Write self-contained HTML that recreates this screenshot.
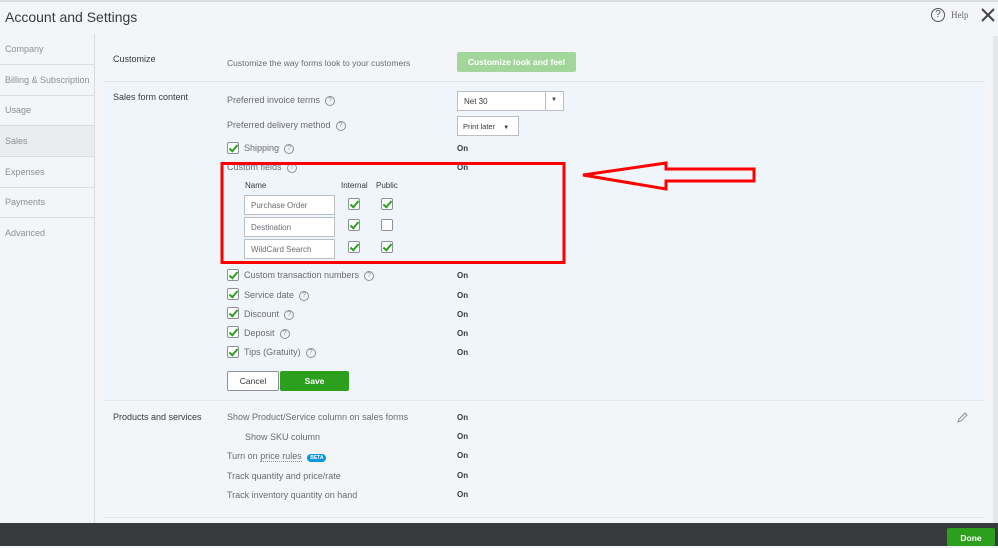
<!DOCTYPE html>
<html><head><meta charset="utf-8"><style>
*{margin:0;padding:0;box-sizing:border-box}
body{width:998px;height:546px;overflow:hidden;background:#f4f5f8;font-family:"Liberation Sans",sans-serif;color:#393a3d;position:relative;font-size:9px}
.a{position:absolute;white-space:nowrap}
.side div{position:absolute;left:0;width:95px;height:31px;border-bottom:1px solid #dcdde0;padding:10px 0 0 5px;color:#8d9096;font-size:9px}
.cb{position:absolute;width:12px;height:12px;border:1px solid #8d9096;background:#fff;border-radius:2px}
.cb.c::after{content:"";position:absolute;left:3px;top:0px;width:3px;height:7px;border:solid #2ca01c;border-width:0 2px 2px 0;transform:rotate(40deg)}
.q{display:inline-block;width:10px;height:10px;border:1px solid #8d9096;border-radius:50%;font-size:7px;text-align:center;line-height:8px;color:#8d9096;margin-left:5px;vertical-align:middle}
.on{position:absolute;left:457px;font-weight:bold;font-size:8px;color:#393a3d}
.inp{position:absolute;left:244px;width:91px;height:20px;border:1px solid #babec5;background:#fff;font-size:8px;padding:5px 0 0 6px;color:#6b6c72}
</style></head><body>
<div class="a" style="left:0;top:0;width:998px;height:2px;background:#dcdde0"></div>
<div class="a" style="left:5px;top:9px;font-size:14px;color:#393a3d">Account and Settings</div>
<div class="a" style="left:931px;top:8px;width:14px;height:14px;border:1.5px solid #555;border-radius:50%;font-size:10px;text-align:center;line-height:11px;color:#555">?</div>
<div class="a" style="left:951px;top:10px;font-family:'Liberation Serif',serif;font-size:9px;color:#666">Help</div>
<svg class="a" style="left:980px;top:7px" width="16" height="16"><path d="M2 2L14 14M14 2L2 14" stroke="#444" stroke-width="2"/></svg>
<div class="side">
<div style="top:34px">Company</div><div style="top:65px">Billing &amp; Subscription</div><div style="top:95px">Usage</div>
<div style="top:126px;background:#ebecef">Sales</div><div style="top:157px">Expenses</div><div style="top:187px">Payments</div><div style="top:218px;border:none">Advanced</div>
</div>
<div class="a" style="left:94px;top:34px;width:1px;height:490px;background:#dcdde0"></div>
<div class="a" style="left:993px;top:36px;width:5px;height:487px;background:#e6e7ea"></div>
<div class="a" style="left:113px;top:54px;font-size:9px">Customize</div>
<div class="a" style="left:227px;top:58px;font-size:8.5px;color:#6b6c72">Customize the way forms look to your customers</div>
<div class="a" style="left:457px;top:52px;width:119px;height:20px;background:#a3d69b;border-radius:2px;color:#fff;font-weight:bold;font-size:8.5px;text-align:center;line-height:20px">Customize look and feel</div>
<div class="a" style="left:104px;top:81px;width:881px;height:320px;background:#f0f5fb;border-top:1px solid #e3e5e8;border-bottom:1px solid #e3e5e8"></div>
<div class="a" style="left:113px;top:92px">Sales form content</div>
<div class="a" style="left:227px;top:95px;color:#6b6c72">Preferred invoice terms<span class="q">?</span></div>
<div class="a" style="left:457px;top:91px;width:107px;height:20px;border:1px solid #babec5;background:#fff;font-size:8px;padding:5px 6px">Net 30</div>
<div class="a" style="left:545px;top:91px;width:1px;height:20px;background:#babec5"></div>
<div class="a" style="left:551px;top:97px;font-size:6px">▼</div>
<div class="a" style="left:227px;top:120px;color:#6b6c72">Preferred delivery method<span class="q">?</span></div>
<div class="a" style="left:457px;top:116px;width:62px;height:20px;border:1px solid #babec5;background:#fff;font-size:7.5px;padding:5px 5px">Print later <span style="font-size:6px;margin-left:6px">▼</span></div>
<div class="cb c" style="left:227px;top:142px"></div>
<div class="a" style="left:244px;top:143px;color:#6b6c72">Shipping<span class="q">?</span></div><div class="on" style="top:144px">On</div>
<div class="a" style="left:227px;top:162px;color:#6b6c72">Custom fields<span class="q">?</span></div><div class="on" style="top:163px">On</div>
<div class="a" style="left:245px;top:181px;font-size:8px">Name</div>
<div class="a" style="left:341px;top:181px;font-size:8px">Internal</div>
<div class="a" style="left:376px;top:181px;font-size:8px">Public</div>
<div class="inp" style="top:195px">Purchase Order</div>
<div class="inp" style="top:217px">Destination</div>
<div class="inp" style="top:239px">WildCard Search</div>
<div class="cb c" style="left:348px;top:198px"></div><div class="cb c" style="left:381px;top:198px"></div>
<div class="cb c" style="left:348px;top:219px"></div><div class="cb" style="left:381px;top:219px"></div>
<div class="cb c" style="left:348px;top:241px"></div><div class="cb c" style="left:381px;top:241px"></div>
<div class="cb c" style="left:227px;top:269px"></div><div class="a" style="left:244px;top:270px;color:#6b6c72">Custom transaction numbers<span class="q">?</span></div><div class="on" style="top:271px">On</div>
<div class="cb c" style="left:227px;top:288px"></div><div class="a" style="left:244px;top:290px;color:#6b6c72">Service date<span class="q">?</span></div><div class="on" style="top:291px">On</div>
<div class="cb c" style="left:227px;top:307px"></div><div class="a" style="left:244px;top:309px;color:#6b6c72">Discount<span class="q">?</span></div><div class="on" style="top:310px">On</div>
<div class="cb c" style="left:227px;top:326px"></div><div class="a" style="left:244px;top:328px;color:#6b6c72">Deposit<span class="q">?</span></div><div class="on" style="top:329px">On</div>
<div class="cb c" style="left:227px;top:346px"></div><div class="a" style="left:244px;top:347px;color:#6b6c72">Tips (Gratuity)<span class="q">?</span></div><div class="on" style="top:348px">On</div>
<div class="a" style="left:227px;top:371px;width:52px;height:20px;border:1px solid #8d9096;background:#fff;border-radius:2px;text-align:center;line-height:18px;font-size:8.5px">Cancel</div>
<div class="a" style="left:280px;top:371px;width:69px;height:20px;background:#2ca01c;border-radius:2px;text-align:center;line-height:20px;font-size:8.5px;color:#fff;font-weight:bold">Save</div>
<div class="a" style="left:113px;top:412px">Products and services</div>
<div class="a" style="left:227px;top:412px;color:#6b6c72">Show Product/Service column on sales forms</div><div class="on" style="top:413px">On</div>
<div class="a" style="left:245px;top:432px;color:#6b6c72">Show SKU column</div><div class="on" style="top:432px">On</div>
<div class="a" style="left:227px;top:451px;color:#6b6c72">Turn on <span style="border-bottom:1px dotted #8d9096">price rules</span> <span style="display:inline-block;background:#0097e6;color:#fff;font-size:5px;font-weight:bold;border-radius:5px;padding:1px 3px;margin-left:3px">BETA</span></div><div class="on" style="top:451px">On</div>
<div class="a" style="left:227px;top:471px;color:#6b6c72">Track quantity and price/rate</div><div class="on" style="top:471px">On</div>
<div class="a" style="left:227px;top:490px;color:#6b6c72">Track inventory quantity on hand</div><div class="on" style="top:490px">On</div>
<svg class="a" style="left:956px;top:412px" width="12" height="12"><path d="M2 10L3 7L9 1L11 3L5 9Z" fill="none" stroke="#8d9096" stroke-width="1"/></svg>
<div class="a" style="left:104px;top:517px;width:881px;height:1px;background:#e3e5e8"></div>
<svg class="a" style="left:0;top:0" width="998" height="546">
<rect x="222" y="163.5" width="342" height="99" fill="none" stroke="#f00" stroke-width="3"/>
<polygon points="583,175 666,163 666,169 754,169 754,181 666,181 666,189" fill="none" stroke="#f00" stroke-width="3"/>
</svg>
<div class="a" style="left:0;top:523px;width:998px;height:23px;background:#393a3d"></div>
<div class="a" style="left:947px;top:528px;width:48px;height:18px;background:#2ca01c;border-radius:2px;color:#fff;font-weight:bold;font-size:8.5px;text-align:center;line-height:20px">Done</div>
</body></html>
